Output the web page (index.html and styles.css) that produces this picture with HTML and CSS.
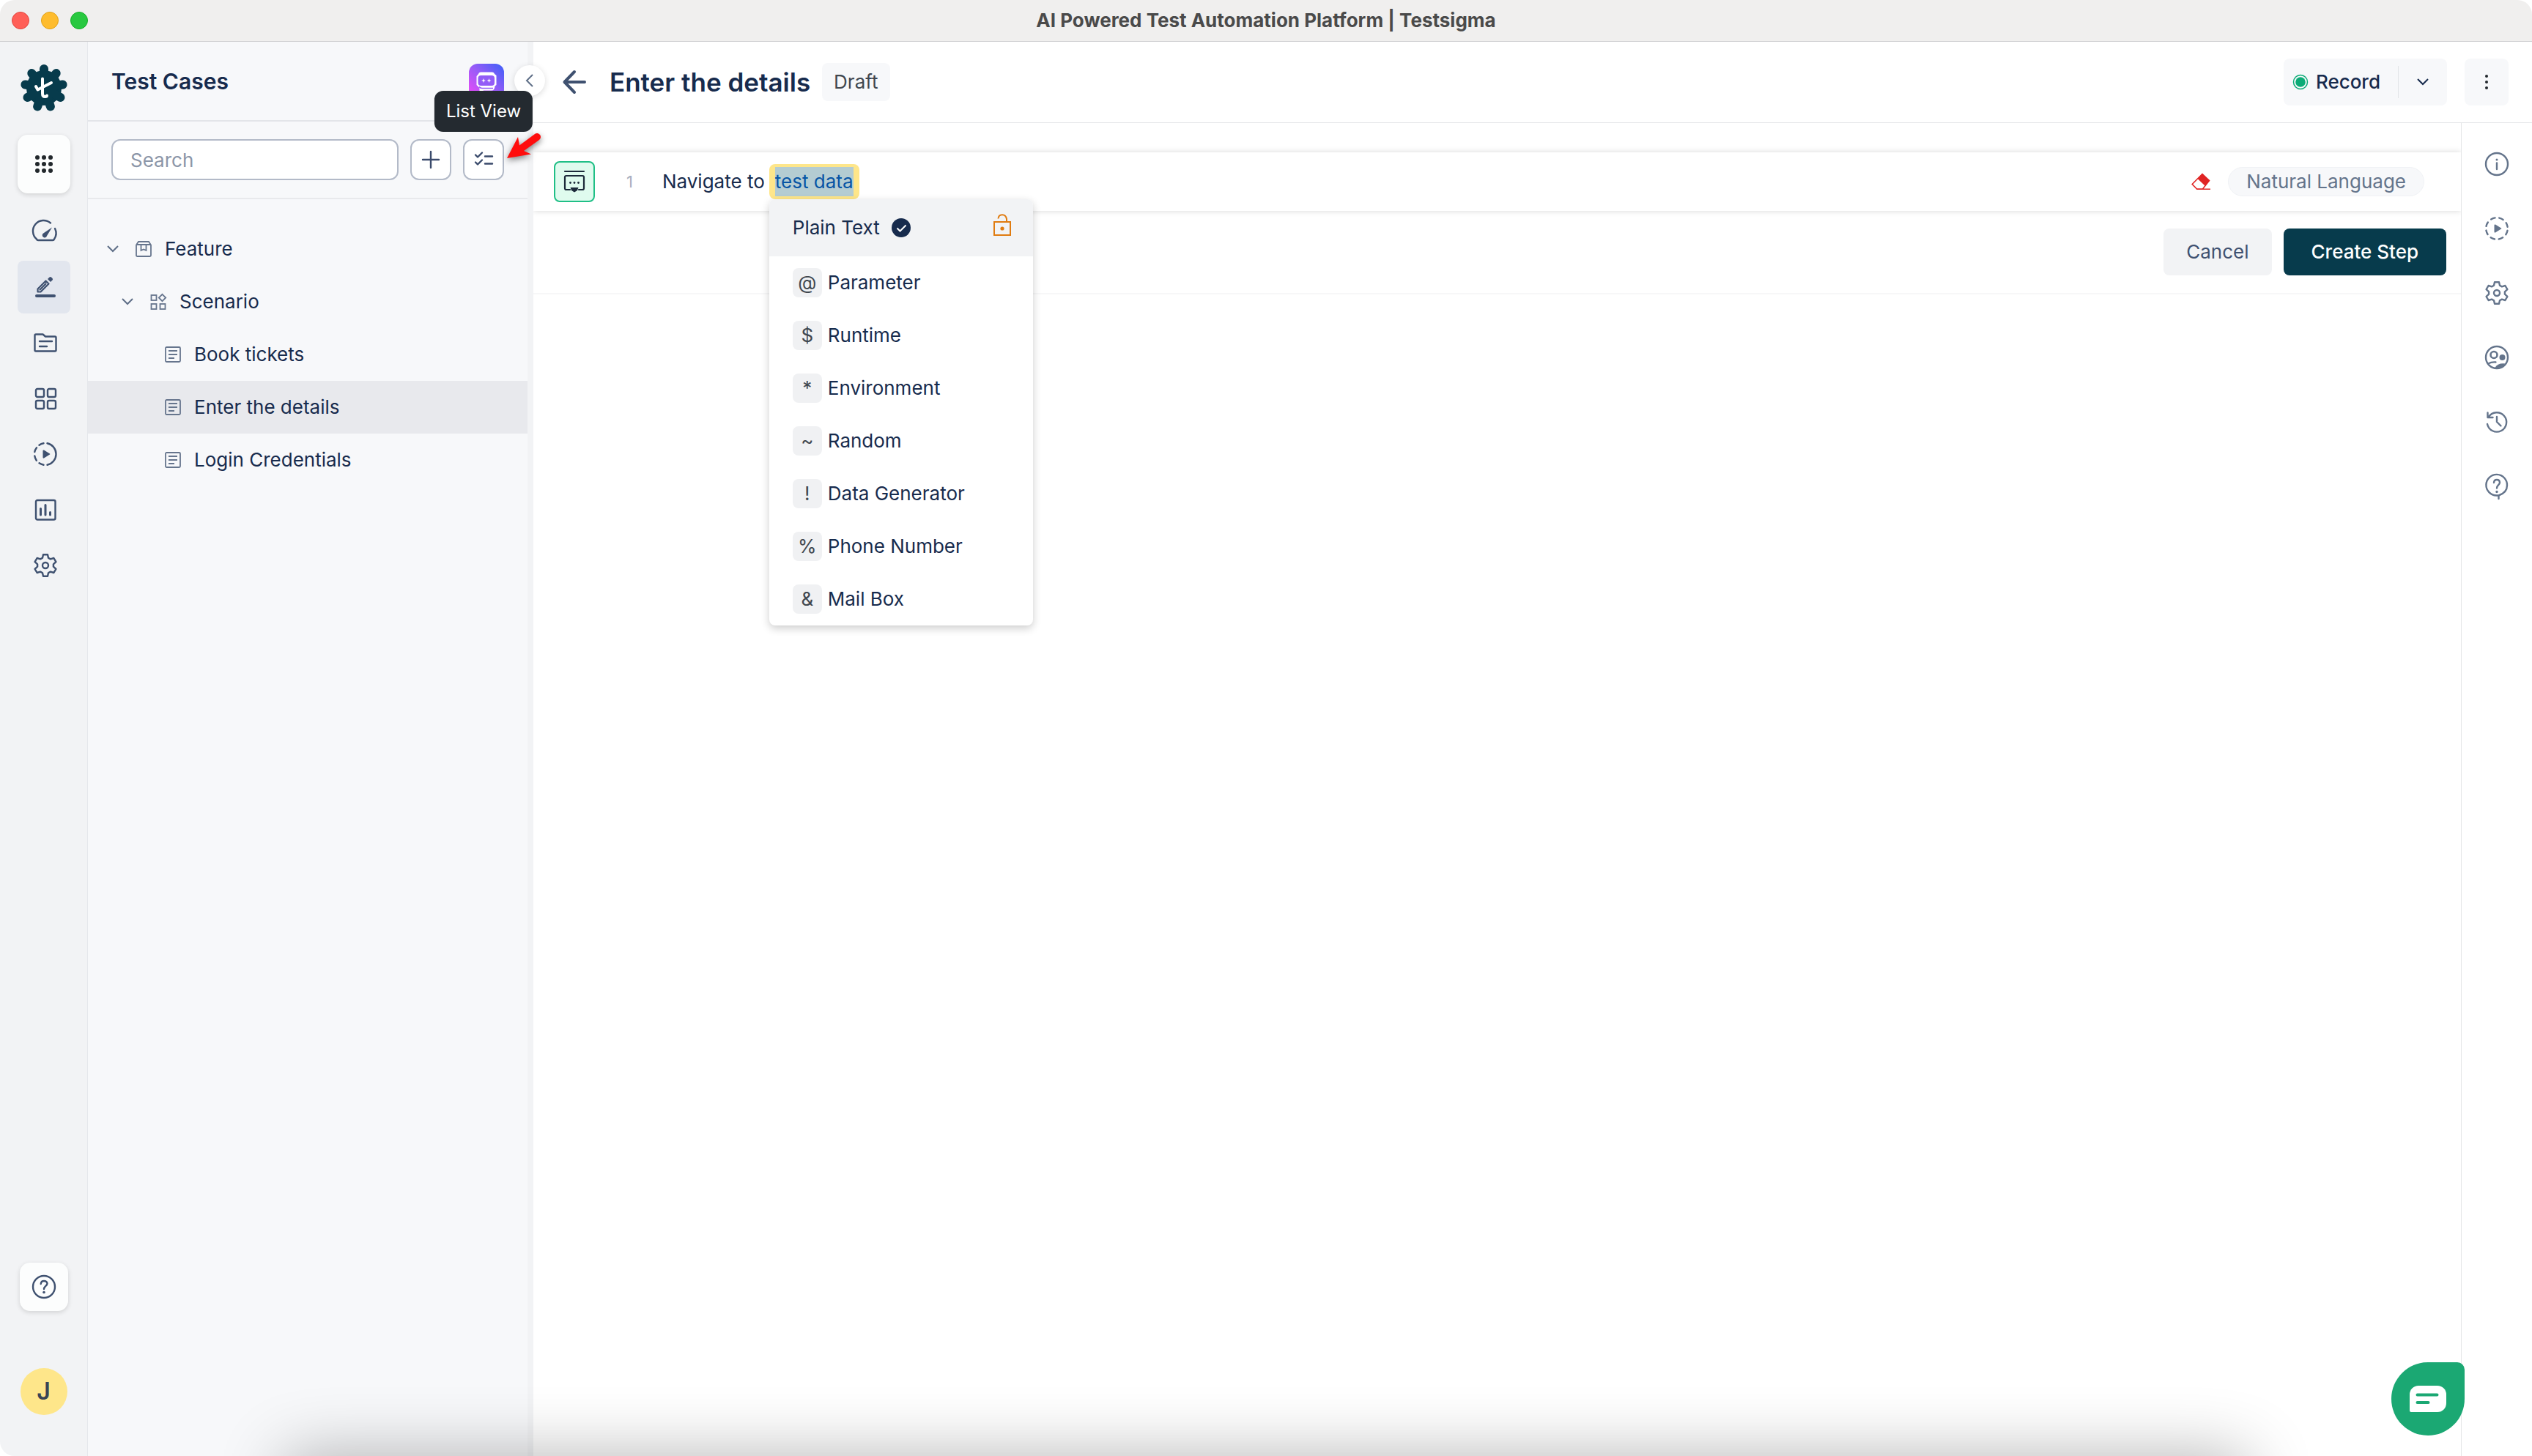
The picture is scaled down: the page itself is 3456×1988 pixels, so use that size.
FILE: index.html
```
<!DOCTYPE html>
<html lang="en">
<head>
  <meta charset="utf-8">
  <title>AI Powered Test Automation Platform | Testsigma</title>
  <link rel="stylesheet" href="styles.css">
</head>
<body>
  <!-- shared icons -->
  <svg class="sprite" aria-hidden="true">
    <symbol id="gear" viewBox="-16 -16 32 32">
      <path d="M-3-14.8H3L4-10.3 6.9-8.6 11.4-10 14.4-4.8 10.9-1.7V1.7L14.4 4.8 11.4 10 6.9 8.6 4 10.3 3 14.8H-3L-4 10.3-6.9 8.6-11.4 10-14.4 4.8-10.9 1.7V-1.7L-14.4-4.8-11.4-10-6.9-8.6-4-10.3z"/>
      <circle r="4"/>
    </symbol>
    <symbol id="doc" viewBox="0 0 22 22">
      <rect x="1" y="1" width="20" height="20" rx="1.5"/>
      <path d="M5 6h12M5 11h12M5 16h8"/>
    </symbol>
    <symbol id="chevron" viewBox="0 0 16 16">
      <path d="M1 4l7 7 7-7"/>
    </symbol>
  </svg>

  <div class="window">
    <header class="titlebar">
      <div class="lights">
        <span class="light red"></span>
        <span class="light yellow"></span>
        <span class="light green"></span>
      </div>
      <div class="window-title">AI Powered Test Automation Platform | Testsigma</div>
    </header>

    <div class="app">
      <nav class="rail">
        <svg class="logo" viewBox="0 0 64 64">
          <circle cx="32" cy="32" r="24" fill="#073b4c"/>
          <path d="M32 32V6M32 32L48.7 12.1M32 32L57.6 27.5M32 32L54.5 45M32 32L40.9 57.4M32 32L23.1 57.4M32 32L9.5 45M32 32L6.4 27.5M32 32L15.3 12.1" stroke="#073b4c" stroke-width="12" stroke-linecap="round"/>
          <path d="M30 19.500V40Q30 44 33.500 44Q36 44 36 42.500M21 30L23.500 34.500L42 25" fill="none" stroke="#fff" stroke-width="4" stroke-linecap="round" stroke-linejoin="round"/>
        </svg>
        <button class="apps" aria-label="Apps">
          <svg class="icon-24 solid" viewBox="0 0 24 24">
            <circle cx="3" cy="3" r="3"/><circle cx="12" cy="3" r="3"/><circle cx="21" cy="3" r="3"/>
            <circle cx="3" cy="12" r="3"/><circle cx="12" cy="12" r="3"/><circle cx="21" cy="12" r="3"/>
            <circle cx="3" cy="21" r="3"/><circle cx="12" cy="21" r="3"/><circle cx="21" cy="21" r="3"/>
          </svg>
        </button>
        <div class="rail-nav">
          <a href="#" class="rail-link" aria-label="Dashboard">
            <svg class="icon" viewBox="0 0 32 32">
              <path d="M23 4.500A14.500 14.500 0 0 0 4 26.500Q4.500 28 6 28H26Q27.500 28 28 26.500A14.500 14.500 0 0 0 29 12"/>
              <path d="M25 10.500L13.200 18.500A3.200 3.200 0 1 0 18 22z" fill="currentColor" stroke="none"/>
            </svg>
          </a>
          <a href="#" class="rail-link active" aria-label="Create tests">
            <svg class="icon" viewBox="0 2 32 32">
              <path d="M5.500 20.500V24.500H9.500L20.500 13.500 16.500 9.500zM8.500 21.500L16.500 13.500" stroke-width="2.2"/>
              <path d="M19 7l2.500-2.500a1.800 1.800 0 0 1 2.500 0l1.500 1.500a1.800 1.800 0 0 1 0 2.500L23 11z" fill="currentColor" stroke="none"/>
              <path d="M4 30H28" stroke-width="4"/>
            </svg>
          </a>
          <a href="#" class="rail-link" aria-label="Test data">
            <svg class="icon" viewBox="0 0 32 32">
              <path d="M1.500 6Q1.500 4.500 3 4.500H12.500L16 7.500H29Q30.500 7.500 30.500 9V26Q30.500 27.500 29 27.500H3Q1.500 27.500 1.500 26zM8 14H25M8 21H18"/>
            </svg>
          </a>
          <a href="#" class="rail-link" aria-label="Add-ons">
            <svg class="icon" viewBox="0 0 32 32">
              <rect x="3" y="3" width="11" height="11" rx="2"/><rect x="19" y="3" width="11" height="11" rx="2"/>
              <rect x="3" y="19" width="11" height="11" rx="2"/><rect x="19" y="19" width="11" height="11" rx="2"/>
            </svg>
          </a>
          <a href="#" class="rail-link" aria-label="Run">
            <svg class="icon" viewBox="0 0 32 32">
              <path d="M18.500 1.300A15 15 0 0 1 18.500 30.700M13.500 1.300Q10 1.900 7.500 3.700M4 7.200Q1.900 10 1.300 13M1.300 18.500Q1.900 22 3.800 24.700M7.500 28.300Q10 30 13.500 30.700"/>
              <path d="M12.500 11.500q0-1.500 1.500-1l8 5q.8.500 0 1l-8 5q-1.500.5-1.500-1z" fill="currentColor" stroke="none"/>
            </svg>
          </a>
          <a href="#" class="rail-link" aria-label="Reports">
            <svg class="icon" viewBox="0 0 32 32">
              <rect x="3" y="3" width="26.500" height="26.500" rx="2"/>
              <path d="M9.500 14.500V23M16 9.500V23M22.500 19.500V23" stroke-width="3"/>
            </svg>
          </a>
          <a href="#" class="rail-link" aria-label="Settings">
            <svg class="icon"><use href="#gear"/></svg>
          </a>
        </div>
        <div class="rail-foot">
          <button class="help" aria-label="Help">
            <svg class="icon" viewBox="0 0 32 32">
              <circle cx="16" cy="16" r="15"/>
              <path d="M11.800 12Q12 8 16 8T20.500 11.500C20.500 14.500 16 15.500 16 19"/>
              <circle cx="16" cy="23.500" r="1.800" fill="currentColor" stroke="none"/>
            </svg>
          </button>
          <button class="avatar">J</button>
        </div>
      </nav>

      <aside class="sidebar">
        <div class="sidebar-head">
          <h2>Test Cases</h2>
          <button class="bot" aria-label="Copilot">
            <svg viewBox="0 0 48 48">
              <defs>
                <linearGradient id="bot-fill" x1="0" y1="1" x2="1" y2="0">
                  <stop offset="0" stop-color="#f549f8"/>
                  <stop offset=".5" stop-color="#9b5bf7"/>
                  <stop offset="1" stop-color="#3b60f8"/>
                </linearGradient>
              </defs>
              <rect width="48" height="48" rx="12" fill="url(#bot-fill)"/>
              <path d="M16 11.500H32Q34.500 11.500 35 14L37.500 16V29L35.500 30.500Q35 36.500 31 36.500H20L14.500 41V33L10.500 29V17L13 14Q13.500 11.500 16 11.500z" fill="#fff"/>
              <rect x="12.500" y="16" width="22.500" height="14" rx="4" fill="#935cf7"/>
              <path d="M14 31.500Q15.500 33.500 18 33.500H33" fill="none" stroke="#935cf7" stroke-width="1.500"/>
              <path d="M20 20l.8 2.200 2.200.8-2.200.8-.8 2.200-.8-2.200-2.200-.8 2.200-.8zM27.500 20l.8 2.200 2.200.8-2.200.8-.8 2.200-.8-2.200-2.200-.8 2.200-.8z" fill="#fff"/>
            </svg>
          </button>
        </div>
        <button class="collapse" aria-label="Collapse">
          <svg viewBox="0 0 20 20"><path d="M14 2L6 10l8 8"/></svg>
        </button>

        <div class="sidebar-tools">
          <input type="text" class="search" placeholder="Search" aria-label="Search">
          <button class="tool" aria-label="Add">
            <svg class="icon-24" viewBox="0 0 24 24"><path d="M12 1V23M1 12H23"/></svg>
          </button>
          <div class="tool-wrap">
            <button class="tool" aria-label="List View">
              <svg class="icon-28" viewBox="0 0 28 28">
                <path d="M3 7.500l3 3L12 4.500M3 17.500l3 3 6-6M16 9.500H26M16 19.500H26"/>
              </svg>
            </button>
            <div class="tooltip">List View</div>
            <svg class="pointer" viewBox="0 0 54 44">
              <path d="M2 38L17 9 19 20.500 40 5A5 5 0 0 1 46 13L25 28 35 32.500z"/>
            </svg>
          </div>
        </div>

        <ul class="tree">
          <li class="node level-1">
            <svg class="caret"><use href="#chevron"/></svg>
            <svg class="node-icon" viewBox="0 0 22 22">
              <path d="M1 5.500L4 1H18L21 5.500V19.500Q21 21 19.500 21H2.500Q1 21 1 19.500zM1 5H21M7.500 5V13L11 11.500 14.500 13V5"/>
            </svg>
            <span>Feature</span>
          </li>
          <li class="node level-2">
            <svg class="caret"><use href="#chevron"/></svg>
            <svg class="node-icon" viewBox="0 0 22 22">
              <rect x="1.500" y="2" width="7" height="7"/><rect x="1.500" y="14" width="7" height="7"/><rect x="13.500" y="14" width="7" height="7"/>
              <path d="M16.500 .8L21.200 5.500 16.500 10.200 11.800 5.500z"/>
            </svg>
            <span>Scenario</span>
          </li>
          <li class="node level-3">
            <svg class="node-icon"><use href="#doc"/></svg>
            <span>Book tickets</span>
          </li>
          <li class="node level-3 selected">
            <svg class="node-icon"><use href="#doc"/></svg>
            <span>Enter the details</span>
          </li>
          <li class="node level-3">
            <svg class="node-icon"><use href="#doc"/></svg>
            <span>Login Credentials</span>
          </li>
        </ul>
      </aside>

      <main class="main">
        <div class="page-head">
          <button class="back" aria-label="Back">
            <svg viewBox="0 0 32 32"><path d="M16 2L2.500 16 16 30M2.500 16H30"/></svg>
          </button>
          <h1>Enter the details</h1>
          <span class="badge">Draft</span>
          <div class="record">
            <button class="record-main">
              <svg viewBox="0 0 22 22">
                <circle cx="11" cy="11" r="9.500" fill="none" stroke="#0cab76" stroke-width="1.500"/>
                <circle cx="11" cy="11" r="6.800" fill="#0cab76"/>
              </svg>
              Record
            </button>
            <button class="record-more" aria-label="More record options">
              <svg class="caret"><use href="#chevron"/></svg>
            </button>
          </div>
          <button class="kebab" aria-label="More">
            <svg viewBox="0 0 4 20"><circle cx="2" cy="2" r="2"/><circle cx="2" cy="10" r="2"/><circle cx="2" cy="18" r="2"/></svg>
          </button>
        </div>

        <div class="page-body">
          <section class="steps">
            <div class="step">
              <div class="step-type">
                <svg viewBox="0 0 32 32">
                  <path d="M3 2H29M10 27H5Q3 27 3 25V10Q3 8 5 8H27Q29 8 29 10V25Q29 27 27 27H22"/>
                  <path d="M10.500 24H21.500L20 28 16 30.500 12 28z" fill="#1c2a3a" stroke="none"/>
                  <circle cx="10.500" cy="17.500" r="1.400" fill="#1c2a3a" stroke="none"/><circle cx="16" cy="17.500" r="1.400" fill="#1c2a3a" stroke="none"/><circle cx="21.500" cy="17.500" r="1.400" fill="#1c2a3a" stroke="none"/>
                </svg>
              </div>
              <span class="step-number">1</span>
              <div class="step-text">Navigate to</div>
              <div class="test-data">
                <span class="test-data-value">test data</span>
                <div class="menu">
                  <div class="menu-head">
                    <span>Plain Text</span>
                    <svg class="check" viewBox="0 0 26 26">
                      <circle cx="13" cy="13" r="13" fill="#172b4d"/>
                      <path d="M7.500 13.500l4 4 8-8" fill="none" stroke="#fff" stroke-width="2"/>
                    </svg>
                    <svg class="lock" viewBox="0 0 24 30">
                      <path d="M1 11H23V29H1zM6.500 6.500Q7 1.200 12 1.200T18 7V11"/>
                      <circle cx="12" cy="20" r="2.600" fill="#e07b10" stroke="none"/>
                    </svg>
                  </div>
                  <button class="menu-item"><span class="key">@</span>Parameter</button>
                  <button class="menu-item"><span class="key">$</span>Runtime</button>
                  <button class="menu-item"><span class="key">*</span>Environment</button>
                  <button class="menu-item"><span class="key">~</span>Random</button>
                  <button class="menu-item"><span class="key">!</span>Data Generator</button>
                  <button class="menu-item"><span class="key">%</span>Phone Number</button>
                  <button class="menu-item"><span class="key">&amp;</span>Mail Box</button>
                </div>
              </div>
              <button class="eraser" aria-label="Clear">
                <svg viewBox="0 0 26 24">
                  <path d="M7.500 22L1.200 15.500 15 1.500 24.500 10.500 15.500 22zM7 22.300H26" fill="none" stroke="#e02424" stroke-width="1.600"/>
                  <path d="M8.500 8L15 1.200 25 10.500 18.500 17.500z" fill="#e02424"/>
                </svg>
              </button>
              <span class="language">Natural Language</span>
            </div>
            <div class="step-actions">
              <button class="btn">Cancel</button>
              <button class="btn primary">Create Step</button>
            </div>
          </section>

          <div class="side-tools">
            <button aria-label="Info">
              <svg class="icon" viewBox="0 0 32 32">
                <circle cx="16" cy="16" r="15"/><path d="M16 14.500V23"/>
                <circle cx="16" cy="10" r="1.500" fill="currentColor" stroke="none"/>
              </svg>
            </button>
            <button aria-label="Run">
              <svg class="icon" viewBox="0 0 32 32">
                <circle cx="16" cy="16" r="14.800" stroke-dasharray="5.800 5.820" stroke-dashoffset="-2.900"/>
                <path d="M12.500 11.500q0-1.500 1.500-1l8 5q.8.500 0 1l-8 5q-1.500.5-1.500-1z" fill="currentColor" stroke="none"/>
              </svg>
            </button>
            <button aria-label="Settings"><svg class="icon"><use href="#gear"/></svg></button>
            <button aria-label="Users">
              <svg class="icon" viewBox="0 0 32 32">
                <circle cx="16" cy="16" r="15"/>
                <circle cx="12" cy="12.500" r="4.500" stroke-width="2.600"/>
                <circle cx="23.500" cy="16" r="4" fill="currentColor" stroke="none"/>
                <path d="M4 24.500Q9 22 14.500 22.500"/>
                <path d="M13.500 30Q17 23.500 27.500 24.500Q23 31 13.500 30z" fill="currentColor" stroke="none"/>
              </svg>
            </button>
            <button aria-label="History">
              <svg class="icon" viewBox="0 0 32 32">
                <path d="M3 19A13.200 13.200 0 1 0 5 9M3.500 3.500V10H10.500M16 9V16L21.500 21.500"/>
              </svg>
            </button>
            <button aria-label="Support">
              <svg class="icon" viewBox="0 0 32 32">
                <path d="M18.500 28.500C26 26 30 21.500 30 14.800A14.300 14.300 0 1 0 15.500 28.500H18.500V33"/>
                <path d="M12 11Q12.200 7 16 7T20 10.800C20 14 16 14.500 16 18.500"/>
                <circle cx="16" cy="23.500" r="1.700" fill="currentColor" stroke="none"/>
              </svg>
            </button>
          </div>
        </div>
      </main>
    </div>

    <button class="chat" aria-label="Chat">
      <svg viewBox="0 0 50 36">
        <path d="M12 0H38A12 12 0 0 1 50 12V24A12 12 0 0 1 38 36H2Q0 36 0 34V12A12 12 0 0 1 12 0z" fill="#fff"/>
        <path d="M10.500 12.500H37.500M10.500 23H25.500" stroke="#1ba873" stroke-width="4" stroke-linecap="round"/>
      </svg>
    </button>
    <div class="dock-shadow"></div>
  </div>
</body>
</html>
```

FILE: styles.css
```
* {
  box-sizing: border-box;
}

body {
  margin: 0;
  background: #fff;
  font-family: Inter, "Liberation Sans", sans-serif;
  font-size: 26px;
  line-height: 36px;
  color: #172b4d;
}

button,
input {
  font: inherit;
  color: inherit;
}

button {
  display: flex;
  align-items: center;
  justify-content: center;
  padding: 0;
  border: none;
  background: none;
  cursor: pointer;
}

svg {
  display: block;
  flex: none;
  overflow: visible;
}

.sprite {
  position: absolute;
  width: 0;
  height: 0;
}

.icon,
.icon-24,
.icon-28 {
  fill: none;
  stroke: currentColor;
  stroke-width: 2.4;
  stroke-linecap: round;
  stroke-linejoin: round;
}

.icon {
  width: 32px;
  height: 32px;
}

.icon-24 {
  width: 24px;
  height: 24px;
}

.icon-28 {
  width: 28px;
  height: 28px;
}

.icon-24.solid {
  fill: #22282c;
  stroke: none;
}

.window {
  position: relative;
  display: flex;
  flex-direction: column;
  height: 100vh;
  border-radius: 20px;
  overflow: hidden;
  background: #fff;
}

/* title bar */

.titlebar {
  display: grid;
  grid-template-columns: 1fr auto 1fr;
  align-items: center;
  height: 57px;
  padding: 0 16px;
  background: #f0efee;
  border-bottom: 1px solid #cdcdcf;
}

.lights {
  display: flex;
  gap: 16px;
}

.light {
  width: 24px;
  height: 24px;
  border-radius: 50%;
  border: 1px solid;
}

.light.red {
  background: #ff5f57;
  border-color: #e2463f;
}

.light.yellow {
  background: #febc2e;
  border-color: #e1a116;
}

.light.green {
  background: #28c840;
  border-color: #14ae28;
}

.window-title {
  font-weight: 700;
  color: #4a4a4a;
}

.app {
  flex: 1;
  display: flex;
  min-height: 0;
}

/* left rail */

.rail {
  display: flex;
  flex-direction: column;
  align-items: center;
  width: 120px;
  padding: 31px 0 56px;
  background: #f2f3f5;
  border-right: 1px solid #e5e7eb;
  color: #3f5170;
}

.logo {
  width: 64px;
  height: 64px;
  margin-bottom: 32px;
}

.apps {
  width: 72px;
  height: 80px;
  margin-bottom: 16px;
}

.apps,
.help {
  background: #fcfdfd;
  border-radius: 14px;
  box-shadow: 0 2px 6px rgba(0, 0, 0, 0.14);
}

.rail-nav {
  display: flex;
  flex-direction: column;
  gap: 4px;
}

.rail-link {
  display: flex;
  align-items: center;
  justify-content: center;
  width: 72px;
  height: 72px;
  padding-left: 4px;
  border-radius: 8px;
  color: inherit;
}

.rail-link.active {
  background: #e2e6ee;
}

.rail-foot {
  display: flex;
  flex-direction: column;
  align-items: center;
  gap: 78px;
  margin-top: auto;
}

.help {
  width: 66px;
  height: 66px;
}

.avatar {
  width: 64px;
  height: 64px;
  border-radius: 50%;
  background: #fee68a;
  font-size: 32px;
  font-weight: 600;
  color: #394454;
}

/* sidebar */

.sidebar {
  position: relative;
  width: 608px;
  background: #f7f8fa;
  border-right: 8px solid #f2f3f5;
}

.sidebar-head {
  display: flex;
  align-items: center;
  justify-content: space-between;
  height: 109px;
  padding: 0 32px;
  border-bottom: 2px solid #e3e5e9;
}

.sidebar-head h2 {
  margin: 0;
  font-size: 30px;
  font-weight: 600;
}

.bot svg {
  width: 48px;
  height: 48px;
}

.collapse {
  position: absolute;
  top: 32px;
  right: -24px;
  width: 42px;
  height: 42px;
  border-radius: 50%;
  background: #fff;
  box-shadow: 0 2px 8px rgba(0, 0, 0, 0.14);
  z-index: 1;
}

.collapse svg {
  width: 20px;
  height: 20px;
  fill: none;
  stroke: #5f6f87;
  stroke-width: 2;
}

.sidebar-tools {
  display: flex;
  gap: 16px;
  padding: 24px 32px;
  border-bottom: 2px solid #e8e9ec;
}

.search {
  flex: 1;
  min-width: 0;
  height: 56px;
  padding: 0 24px;
  border: 2px solid #b3bac8;
  border-radius: 12px;
  background: #fff;
}

.search::placeholder {
  color: #8c96a8;
}

.tool-wrap {
  position: relative;
}

.tool {
  width: 56px;
  height: 56px;
  border: 2px solid #b3bac8;
  border-radius: 12px;
  background: #fff;
  color: #3a4a6b;
}

.tooltip {
  position: absolute;
  bottom: 66px;
  left: 50%;
  transform: translateX(-50%);
  padding: 10px 16px;
  border-radius: 12px;
  background: #242a30;
  color: #fff;
  font-size: 24px;
  white-space: nowrap;
  z-index: 3;
}

.pointer {
  position: absolute;
  top: -12px;
  left: 58px;
  width: 54px;
  height: 44px;
  fill: #ff0d0d;
  filter: drop-shadow(0 3px 4px rgba(0, 0, 0, 0.5));
  z-index: 3;
}

.tree {
  margin: 0;
  padding: 32px 0;
  list-style: none;
}

.node {
  display: flex;
  align-items: center;
  gap: 18px;
  height: 72px;
}

.level-1 {
  padding-left: 26px;
}

.level-2 {
  padding-left: 46px;
}

.level-3 {
  padding-left: 105px;
}

.node.selected {
  background: #e8e9ed;
}

.caret {
  width: 16px;
  height: 16px;
  fill: none;
  stroke: currentColor;
  stroke-width: 2;
}

.node .caret {
  margin-right: 5px;
  color: #5f6f87;
}

.node-icon {
  width: 22px;
  height: 22px;
  fill: none;
  stroke: #66758d;
  stroke-width: 1.8;
}

/* main area */

.main {
  flex: 1;
  display: flex;
  flex-direction: column;
  min-width: 0;
}

.page-head {
  display: flex;
  align-items: center;
  height: 111px;
  padding: 0 32px 0 40px;
  border-bottom: 1px solid #e5e6e8;
}

.back svg {
  width: 32px;
  height: 32px;
  fill: none;
  stroke: #3f5170;
  stroke-width: 4;
  stroke-linecap: round;
  stroke-linejoin: round;
}

.page-head h1 {
  margin: 0 16px 0 32px;
  font-size: 35px;
  font-weight: 600;
}

.badge {
  padding: 8px 16px;
  border-radius: 8px;
  background: #f7f8fa;
  color: #40474f;
}

.record {
  display: flex;
  align-items: center;
  margin-left: auto;
  margin-right: 24px;
  border-radius: 8px;
  background: #f7f8fa;
}

.record-main {
  height: 64px;
  gap: 10px;
  padding: 0 24px 0 12px;
  font-weight: 500;
}

.record-main svg {
  width: 22px;
  height: 22px;
}

.record-more {
  width: 67px;
  height: 44px;
  border-left: 1px solid #e2e4e8;
}

.kebab {
  width: 60px;
  height: 64px;
  border-radius: 8px;
  background: #f7f8fa;
}

.kebab svg {
  width: 4px;
  height: 20px;
  fill: #22282c;
}

.page-body {
  flex: 1;
  display: flex;
}

.steps {
  flex: 1;
  padding-top: 40px;
}

.step {
  display: flex;
  align-items: center;
  height: 80px;
  padding: 0 50px 0 28px;
  background: #fff;
  box-shadow: 0 0 8px rgba(0, 0, 0, 0.16);
  clip-path: inset(-12px 0 -700px 0);
}

.step-type {
  display: flex;
  align-items: center;
  justify-content: center;
  width: 56px;
  height: 56px;
  border: 2px solid #1fbf86;
  border-radius: 8px;
  background: #dffbee;
}

.step-type svg {
  width: 32px;
  height: 32px;
  fill: none;
  stroke: #1c2a3a;
  stroke-width: 2.2;
  stroke-linecap: round;
}

.step-number {
  margin: 0 40px 0 43px;
  font-size: 22px;
  color: #a6aec0;
}

.step-text {
  margin-right: 6px;
}

.test-data {
  position: relative;
  padding: 4px 8px;
  border-radius: 8px;
  background: #fee68a;
}

.test-data-value {
  display: block;
  line-height: 40px;
  background: #b4ccd2;
  color: #0755a5;
}

.menu {
  position: absolute;
  top: 100%;
  left: 0;
  width: 360px;
  border-radius: 8px;
  background: #fff;
  box-shadow: 0 4px 12px rgba(0, 0, 0, 0.2);
  z-index: 2;
}

.menu-head {
  display: flex;
  align-items: center;
  height: 78px;
  padding: 0 30px 0 32px;
  border-radius: 8px 8px 0 0;
  background: #f2f3f5;
}

.check {
  width: 26px;
  height: 26px;
  margin-left: 16px;
}

.lock {
  width: 24px;
  height: 30px;
  margin-bottom: 8px;
  margin-left: auto;
  fill: none;
  stroke: #e07b10;
  stroke-width: 2;
}

.menu-item {
  justify-content: flex-start;
  gap: 8px;
  width: 100%;
  height: 72px;
  padding: 0 32px;
}

.key {
  width: 40px;
  line-height: 40px;
  border-radius: 8px;
  background: #f0f1f3;
  color: #40474f;
  text-align: center;
}

.eraser {
  margin-left: auto;
  margin-right: 24px;
}

.eraser svg {
  width: 26px;
  height: 24px;
}

.language {
  padding: 1px 24px;
  border: 1px solid #f0f2f5;
  border-radius: 20px;
  background: #f7f8fa;
  color: #64748b;
}

.step-actions {
  display: flex;
  justify-content: flex-end;
  gap: 16px;
  padding: 24px 20px;
  border-bottom: 2px solid #f7f7f8;
}

.btn {
  height: 64px;
  padding: 0 31px;
  border-radius: 8px;
  background: #f2f3f5;
  color: #3f5170;
}

.btn.primary {
  padding: 0 38px;
  background: #073b4c;
  color: #fff;
  font-weight: 500;
}

.side-tools {
  display: flex;
  flex-direction: column;
  align-items: center;
  gap: 56px;
  width: 97px;
  padding-top: 40px;
  border-left: 1px solid #e5e6e8;
  color: #64748b;
}

/* floating over the page */

.chat {
  position: absolute;
  right: 92px;
  bottom: 28px;
  width: 100px;
  height: 100px;
  border-radius: 50px 10px 50px 50px;
  background: #1ba873;
  z-index: 2;
}

.chat svg {
  width: 50px;
  height: 36px;
}

.dock-shadow {
  position: absolute;
  top: 100%;
  left: 390px;
  right: 390px;
  height: 100px;
  box-shadow: 0 0 90px rgba(0, 0, 0, 0.3);
  pointer-events: none;
}
```
